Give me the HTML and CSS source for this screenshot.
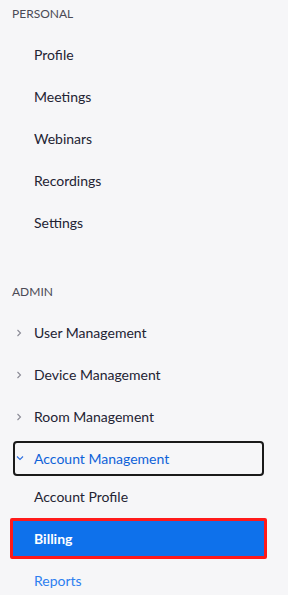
FILE: index.html
```html
<!DOCTYPE html>
<html lang="en">
<head>
  <meta charset="UTF-8" />
  <title>Account Menu</title>
  <link rel="stylesheet" href="styles.css">
</head>
<body>
  <div class="sidebar">
    <div class="section">
      <div class="section-title">Personal</div>
      <div class="nav-row"><a class="nav-link" href="#">Profile</a></div>
      <div class="nav-row"><a class="nav-link" href="#">Meetings</a></div>
      <div class="nav-row"><a class="nav-link" href="#">Webinars</a></div>
      <div class="nav-row"><a class="nav-link" href="#">Recordings</a></div>
      <div class="nav-row"><a class="nav-link" href="#">Settings</a></div>
    </div>

    <div class="section admin">
      <div class="section-title">Admin</div>
      <div class="nav-row">
        <a class="nav-link" href="#">
          <svg class="chev" width="6" height="8" viewBox="0 0 6 8"><path d="M1.5 1 L4.5 4 L1.5 7" fill="none" stroke="currentColor" stroke-width="1.1"/></svg>
          User Management
        </a>
      </div>
      <div class="nav-row">
        <a class="nav-link" href="#">
          <svg class="chev" width="6" height="8" viewBox="0 0 6 8"><path d="M1.5 1 L4.5 4 L1.5 7" fill="none" stroke="currentColor" stroke-width="1.1"/></svg>
          Device Management
        </a>
      </div>
      <div class="nav-row">
        <a class="nav-link" href="#">
          <svg class="chev" width="6" height="8" viewBox="0 0 6 8"><path d="M1.5 1 L4.5 4 L1.5 7" fill="none" stroke="currentColor" stroke-width="1.1"/></svg>
          Room Management
        </a>
      </div>
      <div class="nav-row open">
        <a class="nav-link" href="#">
          <svg class="chev-down" width="8" height="6" viewBox="0 0 8 6"><path d="M1 1.5 L4 4.5 L7 1.5" fill="none" stroke="currentColor" stroke-width="1.1"/></svg>
          Account Management
        </a>
      </div>
      <div class="nav-row"><a class="nav-link" href="#">Account Profile</a></div>
      <div class="nav-row active"><a class="nav-link" href="#">Billing</a></div>
      <div class="nav-row"><a class="nav-link link" href="#">Reports</a></div>
    </div>
  </div>
</body>
</html>
```

FILE: styles.css
```css
body {
  margin: 0;
  font-family: Lato, 'Open Sans', sans-serif;
  background: #fff;
}

.sidebar {
  width: 288px;
  height: 595px;
  background: #f6f6f8;
  overflow: hidden;
}

.section-title {
  padding: 4px 12px 9px;
  line-height: 20px;
  font-size: 12px;
  text-transform: uppercase;
  color: #4a4a55;
}

.admin {
  margin-top: 35px;
}

.nav-row {
  display: flex;
  align-items: center;
  height: 42px;
  padding: 0 24px 0 13px;
  box-sizing: border-box;
}

.nav-link {
  flex: 1;
  display: flex;
  align-items: center;
  height: 35px;
  padding-left: 21px;
  position: relative;
  font-size: 14px;
  color: #232333;
  text-decoration: none;
  box-sizing: border-box;
}

.chev {
  position: absolute;
  left: 3px;
  top: 14px;
  color: #8a8a95;
}

.nav-row.open {
  height: 38px;
  align-items: flex-start;
  padding-top: 4px;
}

.open .nav-link {
  padding-left: 19px;
  border: 2px solid #1a1a1a;
  border-radius: 4px;
  color: #0e62d8;
}

.chev-down {
  position: absolute;
  left: 1px;
  top: 12px;
  color: #2d6fe0;
}

.nav-row.active {
  padding: 0 21px 0 10px;
}

.active .nav-link {
  height: 41px;
  padding-left: 21px;
  background: #0e71eb;
  color: #fff;
  font-weight: bold;
  border: 3px solid #ff1a1a;
  border-radius: 2px;
}

.nav-link.link {
  color: #2d7ff0;
}
```
